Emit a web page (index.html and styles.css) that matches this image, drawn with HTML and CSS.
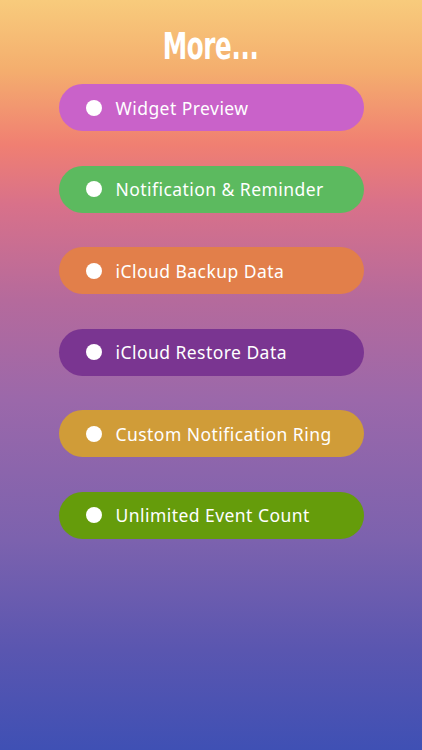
FILE: index.html
```html
<!DOCTYPE html>
<html lang="en">
<head>
  <meta charset="UTF-8" />
  <meta name="viewport" content="width=device-width, initial-scale=1.0" />
  <title>More...</title>
  <link rel="stylesheet" href="styles.css">
</head>
<body>
  <div class="screen">
    <h1 class="title"><span class="title-text">More...</span></h1>
    <ul class="features">
      <li class="pill pill-widget"><span class="dot"></span>Widget Preview</li>
      <li class="pill pill-notify"><span class="dot"></span>Notification &amp; Reminder</li>
      <li class="pill pill-backup"><span class="dot"></span>iCloud Backup Data</li>
      <li class="pill pill-restore"><span class="dot"></span>iCloud Restore Data</li>
      <li class="pill pill-ring"><span class="dot"></span>Custom Notification Ring</li>
      <li class="pill pill-count"><span class="dot"></span>Unlimited Event Count</li>
    </ul>
  </div>
</body>
</html>
```

FILE: styles.css
```css
* { box-sizing: border-box; }
html, body {
  margin: 0;
  height: 100%;
}
body {
  font-family: 'Noto Sans', 'Liberation Sans', sans-serif;
  color: white;
  background: linear-gradient(to bottom,
    #f8cb7c 0px,
    #f4ae6e 70px,
    #f07f72 145px,
    #d8718a 205px,
    #b56a9c 300px,
    #9b68aa 400px,
    #7c62ae 540px,
    #5a56b0 650px,
    #3f50b4 750px);
}
.screen {
  height: 750px;
  padding-top: 26px;
  overflow: hidden;
}
.title {
  margin: 0;
  text-align: center;
  font-family: 'DejaVu Sans Condensed', 'DejaVu Sans', sans-serif;
  font-weight: bold;
  font-size: 38px;
  line-height: 40px;
}
.title-text {
  display: inline-block;
  transform: scaleX(0.72);
  letter-spacing: -0.5px;
}
.features {
  list-style: none;
  margin: 18px auto 0;
  padding: 0;
  width: 305px;
  display: flex;
  flex-direction: column;
  gap: 34.5px;
}
.pill {
  height: 47px;
  border-radius: 24px;
  display: flex;
  align-items: center;
  padding-left: 27px;
  font-size: 17.5px;
  letter-spacing: 0.45px;
}
.dot {
  width: 16px;
  height: 16px;
  border-radius: 50%;
  background: white;
  margin-right: 14px;
  flex-shrink: 0;
}
.pill-widget { background: #c962c9; }
.pill-notify { background: #5cba5f; }
.pill-backup { background: #e27f4a; }
.pill-restore { background: #7a3591; }
.pill-ring { background: #d09c38; }
.pill-count { background: #659c0b; }
```
